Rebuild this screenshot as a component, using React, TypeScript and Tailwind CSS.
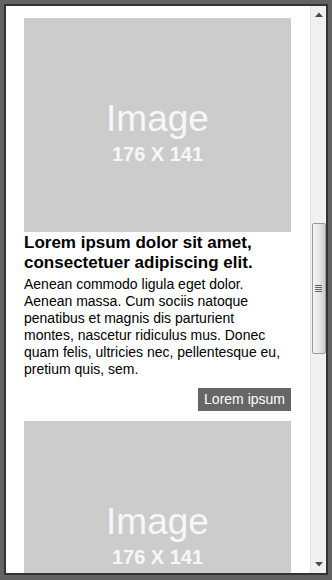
import React from "react";

function Placeholder() {
  return (
    <div className="w-[267px] h-[214px] bg-[#cccccc] flex flex-col items-center pt-[82px] shrink-0">
      <div className="text-[37px] leading-[37px] text-[#f7f7f7]">Image</div>
      <div className="mt-[7px] text-[20px] leading-[20px] font-bold text-[#f7f7f7]">176 X 141</div>
    </div>
  );
}

function Card() {
  return (
    <div className="flex flex-col">
      <Placeholder />
      <h3 className="mt-[1px] text-[17px] leading-[20px] font-bold text-black">
        Lorem ipsum dolor sit amet, consectetuer adipiscing elit.
      </h3>
      <p className="mt-[3px] w-[262px] text-[14px] leading-[17px] text-black">
        Aenean commodo ligula eget dolor. Aenean massa. Cum sociis natoque penatibus et magnis dis parturient montes, nascetur ridiculus mus. Donec quam felis, ultricies nec, pellentesque eu, pretium quis, sem.
      </p>
      <div className="mt-[10px] flex justify-end">
        <button className="h-[23px] px-[6px] bg-[#666666] text-white text-[14px] leading-[23px]">Lorem ipsum</button>
      </div>
    </div>
  );
}

function Scrollbar() {
  return (
    <div className="w-[16px] bg-[#f0f0f0] border-l border-[#e4e4e4] flex flex-col items-center shrink-0">
      <div className="h-[17px] w-full flex items-center justify-center">
        <svg width="8" height="5" viewBox="0 0 8 5">
          <polygon points="0,5 8,5 4,0.5" fill="#4a4a4a" />
        </svg>
      </div>
      <div className="mt-[200px] h-[131px] w-[14px] rounded-[2px] border border-[#9a9a9a] bg-gradient-to-r from-[#f4f4f4] via-[#e6e6e6] to-[#cdcdcd] flex items-center justify-center">
        <div className="flex flex-col gap-[1px]">
          <div className="w-[7px] h-[1px] bg-[#606060]" />
          <div className="w-[7px] h-[1px] bg-[#606060]" />
          <div className="w-[7px] h-[1px] bg-[#606060]" />
          <div className="w-[7px] h-[1px] bg-[#606060]" />
        </div>
      </div>
      <div className="flex-1" />
      <div className="h-[17px] w-full flex items-center justify-center">
        <svg width="8" height="5" viewBox="0 0 8 5">
          <polygon points="0,0 8,0 4,4.5" fill="#4a4a4a" />
        </svg>
      </div>
    </div>
  );
}

export default function App() {
  return (
    <div
      className="w-[332px] h-[580px] bg-[#626262] pl-[4px] pt-[4px] overflow-hidden"
      style={{ fontFamily: '"Liberation Sans", Arial, sans-serif' }}
    >
      <div className="w-[324px] h-[571px] border-2 border-[#333333] bg-white flex">
        <div className="flex-1 overflow-hidden pt-[12px] pl-[18px]">
          <div className="w-[267px] flex flex-col gap-[10px]">
            <Card />
            <Card />
          </div>
        </div>
        <Scrollbar />
      </div>
    </div>
  );
}
